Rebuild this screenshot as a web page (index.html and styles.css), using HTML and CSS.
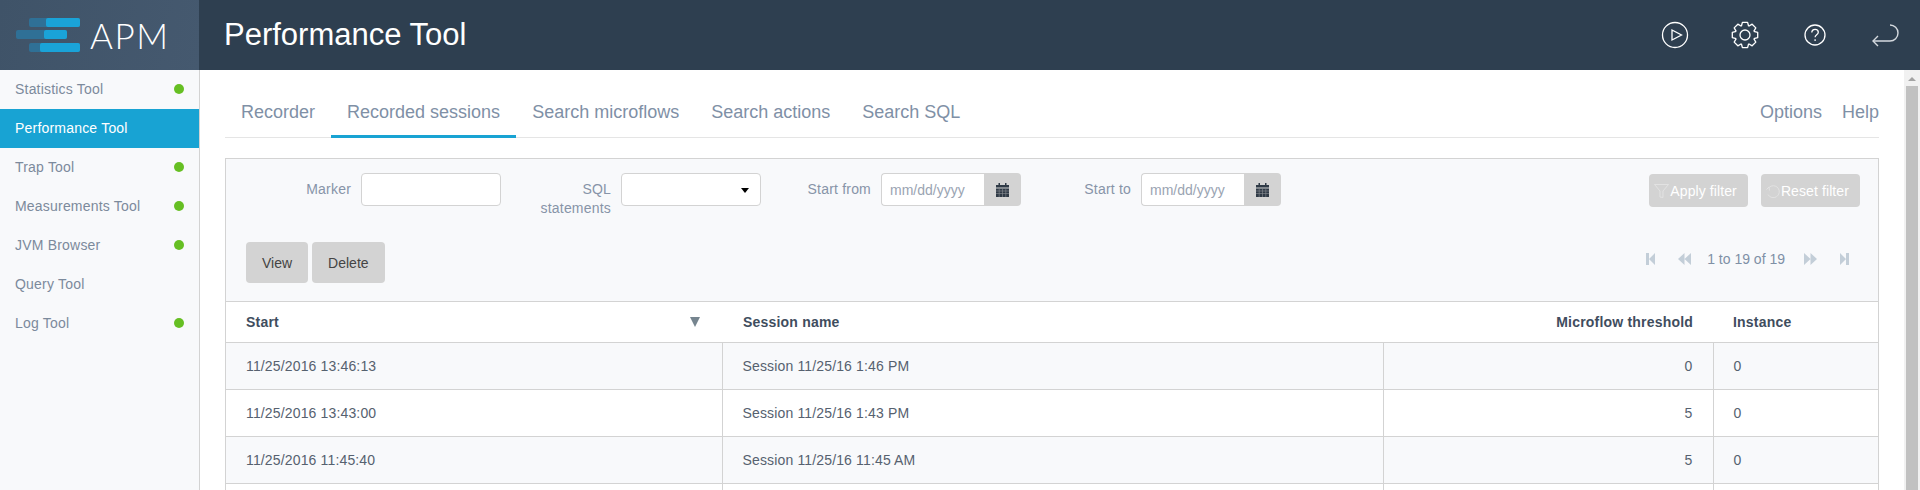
FILE: index.html
```html
<!DOCTYPE html>
<html lang="en">
<head>
<meta charset="utf-8">
<title>APM - Performance Tool</title>
<link rel="stylesheet" href="styles.css">
</head>
<body>
<header class="topbar">
  <div class="brand">
    <svg class="brand-mark" width="66" height="34" viewBox="0 0 66 34">
      <rect x="13" y="0" width="51" height="9" rx="2" fill="#2f7096"/>
      <rect x="30" y="0" width="34" height="9" rx="2" fill="#1aa3d8"/>
      <rect x="0" y="12" width="51" height="9" rx="2" fill="#2f7096"/>
      <rect x="28" y="12" width="23" height="9" rx="2" fill="#1aa3d8"/>
      <rect x="13" y="25" width="51" height="9" rx="2" fill="#2f7096"/>
      <rect x="24" y="25" width="40" height="9" rx="2" fill="#1aa3d8"/>
    </svg>
    <span class="brand-name">APM</span>
  </div>
  <h1 class="page-title">Performance Tool</h1>
  <div class="top-actions">
    <button class="top-icon" aria-label="Run">
      <svg width="28" height="28" viewBox="0 0 28 28" fill="none" stroke="#fff" stroke-width="1.3"><circle cx="14" cy="14" r="12.5"/><path d="M11 9 20.500 14 11 19z"/></svg>
    </button>
    <button class="top-icon" aria-label="Settings">
      <svg width="28" height="28" viewBox="-14 -14 28 28" fill="none" stroke="#fff" stroke-width="1.3" stroke-linejoin="round">
        <defs><path id="tooth" d="M-3.640-8.780-2.600-12.700H2.600L3.640-8.780"/></defs>
        <use href="#tooth"/><use href="#tooth" transform="rotate(45)"/><use href="#tooth" transform="rotate(90)"/><use href="#tooth" transform="rotate(135)"/><use href="#tooth" transform="rotate(180)"/><use href="#tooth" transform="rotate(225)"/><use href="#tooth" transform="rotate(270)"/><use href="#tooth" transform="rotate(315)"/>
        <circle r="5"/>
      </svg>
    </button>
    <button class="top-icon" aria-label="Help">
      <svg width="24" height="24" viewBox="0 0 24 24" fill="none" stroke="#fff" stroke-width="1.300"><circle cx="12" cy="12" r="10"/><path d="M8.800 9.500c0-2 1.500-3.200 3.300-3.200s3.200 1.200 3.200 2.900c0 2.500-3.200 2.500-3.200 5"/><path d="M12.100 16.200v1.800"/></svg>
    </button>
    <button class="top-icon" aria-label="Log out">
      <svg width="28" height="24" viewBox="0 0 28 24" fill="none" stroke="#d5dadf" stroke-width="1.400"><path d="M19 2a8 8 0 0 1 0 16H2"/><path d="M7 13l-5 5 5 5"/></svg>
    </button>
  </div>
</header>
<div class="layout">
  <nav class="sidebar">
    <a class="side-item">Statistics Tool<i class="dot"></i></a>
    <a class="side-item is-active">Performance Tool</a>
    <a class="side-item">Trap Tool<i class="dot"></i></a>
    <a class="side-item">Measurements Tool<i class="dot"></i></a>
    <a class="side-item">JVM Browser<i class="dot"></i></a>
    <a class="side-item">Query Tool</a>
    <a class="side-item">Log Tool<i class="dot"></i></a>
  </nav>
  <main class="content">
    <div class="tabs">
      <a class="tab">Recorder</a>
      <a class="tab is-active">Recorded sessions</a>
      <a class="tab">Search microflows</a>
      <a class="tab">Search actions</a>
      <a class="tab">Search SQL</a>
      <a class="tab-link tab-link-first">Options</a>
      <a class="tab-link">Help</a>
    </div>
    <section class="panel">
      <div class="filters">
        <div class="field"><label class="field-label">Marker</label><input class="text-input" type="text"></div>
        <div class="field"><label class="field-label">SQL statements</label><div class="select-box"></div></div>
        <div class="field"><label class="field-label">Start from</label><div class="date-box"><input class="date-input" type="text" placeholder="mm/dd/yyyy"><span class="date-btn"><svg width="13" height="14" viewBox="0 0 13 14"><path fill="#2f3a46" d="M0 2h2.500V0h1.500v2h5V0h1.500v2H13v2.500H0zM0 5.500h13V14H0z"/><path stroke="#8a8f94" stroke-width=".6" d="M0 8h13M0 10.500h13M3.200 5.500V14M6.500 5.500V14M9.800 5.500V14"/></svg></span></div></div>
        <div class="field"><label class="field-label">Start to</label><div class="date-box"><input class="date-input" type="text" placeholder="mm/dd/yyyy"><span class="date-btn"><svg width="13" height="14" viewBox="0 0 13 14"><path fill="#2f3a46" d="M0 2h2.500V0h1.500v2h5V0h1.500v2H13v2.500H0zM0 5.500h13V14H0z"/><path stroke="#8a8f94" stroke-width=".6" d="M0 8h13M0 10.500h13M3.200 5.500V14M6.500 5.500V14M9.800 5.500V14"/></svg></span></div></div>
        <div class="filter-actions">
          <button class="filter-btn"><svg width="15" height="14" viewBox="0 0 15 14" fill="none" stroke="#e2e2e2"><path d="M.5.500h14L9 7v6.500L6 13V7z"/></svg>Apply filter</button>
          <button class="filter-btn"><svg width="14" height="14" viewBox="0 0 14 14" fill="none" stroke="#e2e2e2"><path d="M3 3.500a6 6 0 1 1-1 7"/><path d="M.5 5.500 3 3l.500 3.500"/></svg>Reset filter</button>
        </div>
      </div>
      <div class="toolbar">
        <button class="action-btn">View</button>
        <button class="action-btn">Delete</button>
        <div class="pager">
          <svg class="pg pg-first" width="9" height="12" viewBox="0 0 9 12"><path d="M0 0h3v12H0zM9 0v12L3 6z"/></svg>
          <svg class="pg pg-prev" width="13" height="12" viewBox="0 0 13 12"><path d="M6.500 0v12L0 6zM13 0v12L6.500 6z"/></svg>
          <span class="pager-text">1 to 19 of 19</span>
          <svg class="pg pg-next" width="13" height="12" viewBox="0 0 13 12"><path d="M0 0v12l6.500-6zM6.500 0v12L13 6z"/></svg>
          <svg class="pg pg-last" width="9" height="12" viewBox="0 0 9 12"><path d="M0 0v12l6-6zM6 0h3v12H6z"/></svg>
        </div>
      </div>
      <table class="grid">
        <colgroup><col class="c1"><col class="c2"><col class="c3"><col class="c4"></colgroup>
        <thead>
          <tr><th><span class="th-sort">Start<i class="sort-arrow"></i></span></th><th class="th-session">Session name</th><th class="num">Microflow threshold</th><th>Instance</th></tr>
        </thead>
        <tbody>
          <tr class="odd"><td>11/25/2016 13:46:13</td><td>Session 11/25/16 1:46 PM</td><td class="num">0</td><td>0</td></tr>
          <tr><td>11/25/2016 13:43:00</td><td>Session 11/25/16 1:43 PM</td><td class="num">5</td><td>0</td></tr>
          <tr class="odd"><td>11/25/2016 11:45:40</td><td>Session 11/25/16 11:45 AM</td><td class="num">5</td><td>0</td></tr>
          <tr><td></td><td></td><td></td><td></td></tr>
        </tbody>
      </table>
    </section>
  </main>
  <div class="scrollbar"><span class="scroll-up"></span><span class="scroll-thumb"></span></div>
</div>
</body>
</html>
```
FILE: styles.css
```css
* { box-sizing: border-box; }
html, body { margin: 0; height: 490px; overflow: hidden; }
body { font-family: "Liberation Sans", Arial, sans-serif; font-size: 14px; color: #4f5b6b; background: #fff; display: flex; flex-direction: column; }
button { font-family: inherit; border: 0; }

.topbar { height: 70px; flex: none; display: flex; align-items: center; background: #2e3f50; }
.brand { width: 199px; height: 70px; flex: none; display: flex; align-items: center; padding-left: 16px; background: linear-gradient(100deg, #3f5368, #45596f); }
.brand-mark { flex: none; }
.brand-name { margin-left: 8px; font-family: Lato, sans-serif; font-weight: 300; font-size: 35px; color: #fff; letter-spacing: 1.5px; }
.page-title { margin: 0 0 0 25px; font-size: 31px; font-weight: 400; color: #fff; }
.top-actions { margin-left: auto; display: flex; }
.top-icon { width: 70px; height: 70px; padding: 0; background: none; display: flex; align-items: center; justify-content: center; }

.layout { flex: 1; display: flex; min-height: 0; }
.sidebar { width: 200px; flex: none; background: #f8f9fb; border-right: 1px solid #d3d3d3; }
.side-item { height: 39px; display: flex; align-items: center; justify-content: space-between; padding: 0 15px 2px; color: #7c8a9c; letter-spacing: .2px; }
.side-item.is-active { background: #18a3d3; color: #fff; }
.dot { width: 10px; height: 10px; border-radius: 50%; background: #66bf23; }

.content { flex: 1; min-width: 0; padding: 0 24px 0 25px; overflow: hidden; }
.tabs { height: 68px; display: flex; align-items: stretch; border-bottom: 1px solid #e5e5e5; font-size: 18px; color: #7f90a6; }
.tab { padding: 32px 16px 0; margin-bottom: -1px; border-bottom: 3px solid transparent; }
.tab.is-active { border-bottom-color: #18a3d3; }
.tab-link { padding-top: 32px; margin-left: 20px; }
.tab-link-first { margin-left: auto; }

.panel { margin-top: 20px; background: #f8f9fb; border: 1px solid #d3d3d3; border-bottom: 0; }
.filters { display: flex; padding: 14px 18px 0 15px; height: 83px; }
.field { width: 260px; flex: none; display: flex; justify-content: flex-end; gap: 10px; }
.field-label { width: 90px; padding-top: 7px; line-height: 19px; text-align: right; color: #8794a8; letter-spacing: .2px; }
.text-input, .select-box { width: 140px; height: 33px; border: 1px solid #d3d3d3; border-radius: 4px; background: #fff; display: block; }
.select-box { position: relative; }
.select-box::after { content: ""; position: absolute; right: 11px; top: 14px; border: 4.5px solid transparent; border-top: 5px solid #000; border-bottom: 0; }
.date-box { width: 140px; height: 33px; display: flex; }
.date-input { width: 103px; height: 33px; padding: 0 8px; border: 1px solid #d3d3d3; border-right: 0; border-radius: 4px 0 0 4px; background: #fff; font: 14px "Liberation Sans", Arial, sans-serif; }
.date-input::placeholder { color: #9aa4b2; opacity: 1; }
.date-btn { width: 37px; display: flex; align-items: center; justify-content: center; background: #d3d3d3; border-radius: 0 4px 4px 0; }
.filter-actions { margin-left: auto; display: flex; gap: 13px; padding-top: 1px; }
.filter-btn { height: 33px; padding: 0 11px 0 5px; display: flex; align-items: center; gap: 1px; background: #d3d3d3; border-radius: 4px; color: #fff; font-size: 14px; letter-spacing: .1px; }
.filter-btn svg { flex: none; }

.toolbar { height: 59px; display: flex; gap: 4px; padding-left: 20px; }
.action-btn { height: 41px; padding: 0 16px; background: #d3d3d3; border-radius: 4px; color: #444; font-size: 14px; }
.pager { margin-left: auto; margin-right: 29px; height: 33px; display: flex; align-items: center; color: #7f90a6; }
.pager-text { margin: 0 19px 0 16px; }
.pg { fill: #c3ced8; flex: none; }
.pg-first { margin-right: 23px; }
.pg-next { margin-right: 23px; }

.grid { width: 100%; table-layout: fixed; border-collapse: collapse; background: #fff; letter-spacing: .15px; }
.c1 { width: 496px; }
.c2 { width: 661px; }
.c3 { width: 330px; }
.grid th { height: 41px; padding: 0 20px; border-top: 1px solid #d3d3d3; text-align: left; font-size: 14px; font-weight: 700; color: #3f4d5e; letter-spacing: .2px; }
.grid .th-session { padding-left: 21px; }
.grid td { height: 47px; padding: 0 20px; border: 1px solid #d3d3d3; color: #56616f; }
.grid td:first-child { border-left: 0; }
.grid td:last-child { border-right: 0; }
.grid .num { text-align: right; }
.grid .odd td { background: #f8f9fb; }
.th-sort { display: flex; align-items: center; justify-content: space-between; }
.sort-arrow { border: 5.500px solid transparent; border-top: 10px solid #76858f; border-bottom: 0; margin-right: 2px; }

.scrollbar { width: 17px; flex: none; background: #f1f1f1; border-left: 1px solid #fff; display: flex; flex-direction: column; align-items: center; }
.scroll-up { flex: none; margin-top: 7px; border: 4px solid transparent; border-bottom: 4px solid #a3a3a3; border-top: 0; }
.scroll-thumb { flex: 1; width: 12px; margin-top: 5px; background: #c1c1c1; }
```
